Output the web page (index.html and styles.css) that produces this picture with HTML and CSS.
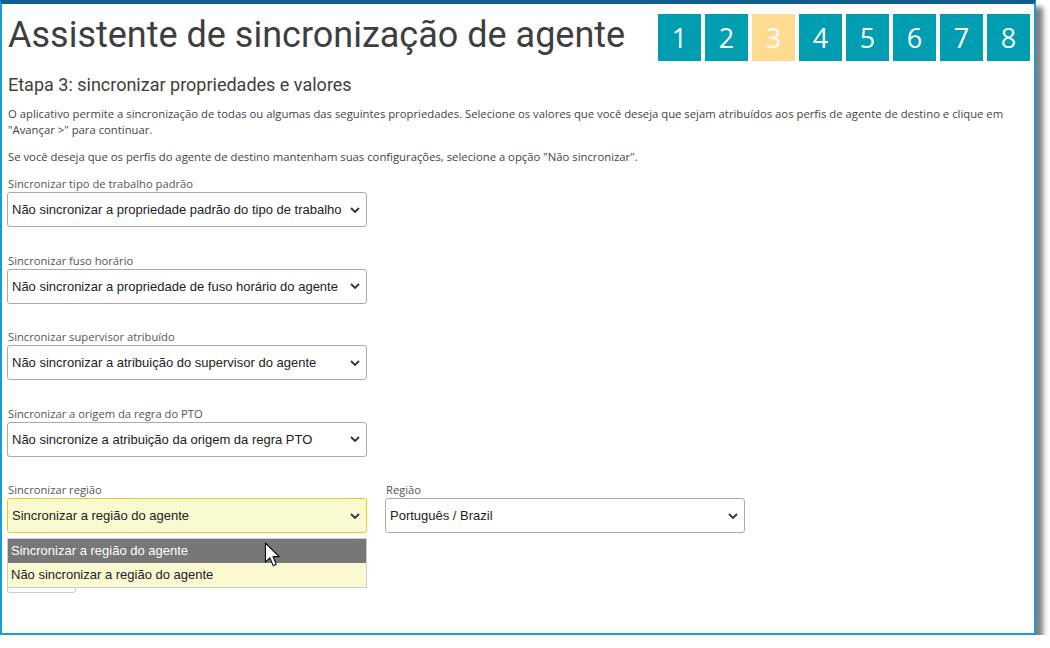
FILE: index.html
```html
<!DOCTYPE html>
<html lang="pt-BR">
<head>
<meta charset="utf-8">
<title>Assistente de sincronização de agente</title>
<link rel="stylesheet" href="styles.css">
</head>
<body>
<div class="frame">
  <div class="content">
    <div class="header">
      <h1 class="title">Assistente de sincronização de agente</h1>
      <div class="steps">
        <div class="step">1</div>
        <div class="step">2</div>
        <div class="step current">3</div>
        <div class="step">4</div>
        <div class="step">5</div>
        <div class="step">6</div>
        <div class="step">7</div>
        <div class="step">8</div>
      </div>
    </div>
    <h2 class="subtitle">Etapa 3: sincronizar propriedades e valores</h2>
    <p class="para">O aplicativo permite a sincronização de todas ou algumas das seguintes propriedades. Selecione os valores que você deseja que sejam atribuídos aos perfis de agente de destino e clique em "Avançar &gt;" para continuar.</p>
    <p class="para para2">Se você deseja que os perfis do agente de destino mantenham suas configurações, selecione a opção "Não sincronizar".</p>

    <div class="field">
      <div class="label">Sincronizar tipo de trabalho padrão</div>
      <div class="select"><span>Não sincronizar a propriedade padrão do tipo de trabalho</span><svg class="chev" viewBox="0 0 10 6" width="10" height="6"><path d="M1 1 L5 5 L9 1" fill="none" stroke="#333" stroke-width="1.8"/></svg></div>
    </div>
    <div class="field">
      <div class="label">Sincronizar fuso horário</div>
      <div class="select"><span>Não sincronizar a propriedade de fuso horário do agente</span><svg class="chev" viewBox="0 0 10 6" width="10" height="6"><path d="M1 1 L5 5 L9 1" fill="none" stroke="#333" stroke-width="1.8"/></svg></div>
    </div>
    <div class="field">
      <div class="label">Sincronizar supervisor atribuído</div>
      <div class="select"><span>Não sincronizar a atribuição do supervisor do agente</span><svg class="chev" viewBox="0 0 10 6" width="10" height="6"><path d="M1 1 L5 5 L9 1" fill="none" stroke="#333" stroke-width="1.8"/></svg></div>
    </div>
    <div class="field">
      <div class="label">Sincronizar a origem da regra do PTO</div>
      <div class="select"><span>Não sincronize a atribuição da origem da regra PTO</span><svg class="chev" viewBox="0 0 10 6" width="10" height="6"><path d="M1 1 L5 5 L9 1" fill="none" stroke="#333" stroke-width="1.8"/></svg></div>
    </div>
    <div class="row">
      <div class="field region-field">
        <div class="label">Sincronizar região</div>
        <div class="select active"><span>Sincronizar a região do agente</span><svg class="chev" viewBox="0 0 10 6" width="10" height="6"><path d="M1 1 L5 5 L9 1" fill="none" stroke="#333" stroke-width="1.8"/></svg></div>
        <div class="dropdown">
          <div class="opt hl">Sincronizar a região do agente</div>
          <div class="opt">Não sincronizar a região do agente</div>
        </div>
        <svg class="cursor" viewBox="0 0 14 22" width="17" height="26"><path d="M1 1 L1 17 L4.8 13.4 L7.6 20 L10.2 18.9 L7.4 12.4 L12.6 12.4 Z" fill="#fff" stroke="#000" stroke-width="0.9" stroke-linejoin="round"/></svg>
      </div>
      <div class="field">
        <div class="label">Região</div>
        <div class="select"><span>Português / Brazil</span><svg class="chev" viewBox="0 0 10 6" width="10" height="6"><path d="M1 1 L5 5 L9 1" fill="none" stroke="#333" stroke-width="1.8"/></svg></div>
      </div>
    </div>
    <div class="btn">&nbsp;</div>
  </div>
</div>
</body>
</html>
```
FILE: styles.css
```css
html, body {
  margin: 0;
  padding: 0;
  background: #fff;
}
.frame {
  width: 1032px;
  height: 629px;
  border-left: 2px solid #1a9ad6;
  border-right: 2px solid #1a9ad6;
  border-bottom: 2px solid #1a9ad6;
  border-top: 4px solid #0e5f90;
  box-shadow: 7px 7px 5px rgba(0,0,0,0.5);
  background: #fff;
  overflow: hidden;
}
.content {
  padding: 10px 0 0 5px;
  font-family: "Open Sans", sans-serif;
  color: #444;
}
.header {
  display: flex;
  justify-content: space-between;
  align-items: flex-start;
  padding-right: 4px;
}
.title {
  margin: 0;
  font-family: Roboto, sans-serif;
  font-weight: 400;
  font-size: 36px;
  line-height: 44px;
  color: #3e3e3e;
  padding-left: 1px;
  margin-top: -1px;
}
.steps {
  display: flex;
  gap: 4px;
}
.step {
  width: 43px;
  height: 47px;
  background: #009eb0;
  color: #fff;
  font-family: "Open Sans", sans-serif;
  font-size: 27px;
  line-height: 47px;
  text-align: center;
}
.step.current {
  background: #ffdb92;
}
.subtitle {
  margin: 13px 0 0 1px;
  font-family: Roboto, sans-serif;
  font-weight: 400;
  font-size: 18px;
  line-height: 22px;
  color: #3e3e3e;
}
.para {
  margin: 10px 0 0 1px;
  font-size: 11.3px;
  line-height: 16px;
  color: #444;
  width: 1020px;
}
.para2 {
  margin-top: 11px;
}
.field {
  margin-top: 11px;
  width: 360px;
  position: relative;
}
.field + .field, .row {
  margin-top: 25.5px;
}
.row .field {
  margin-top: 0;
}
.row {
  display: flex;
  gap: 18px;
}
.label {
  font-size: 11.2px;
  line-height: 16px;
  color: #555;
  padding-left: 1px;
}
.select {
  height: 33px;
  border: 1px solid #aaa;
  border-radius: 3px;
  display: flex;
  align-items: center;
  justify-content: space-between;
  padding: 0 6px 0 4px;
  font-family: "Liberation Sans", Arial, sans-serif;
  font-size: 13px;
  color: #222;
  background: #fff;
}
.select.active {
  background: #f9f9d2;
  border-color: #f2c811;
}
.chev {
  flex: none;
}
.dropdown {
  position: absolute;
  left: 0;
  top: 56px;
  width: 358px;
  border: 1px solid #ccc;
  background: #f9f9d2;
  z-index: 2;
  font-family: "Liberation Sans", Arial, sans-serif;
  font-size: 13px;
}
.opt {
  height: 24px;
  line-height: 24px;
  padding-left: 3px;
  color: #222;
}
.opt.hl {
  background: #777;
  color: #fff;
}
.cursor {
  position: absolute;
  left: 257px;
  top: 60px;
  z-index: 3;
}
.btn {
  width: 67px;
  height: 30px;
  margin-top: 28px;
  border: 1px solid #ccc;
  border-radius: 3px;
}
```
